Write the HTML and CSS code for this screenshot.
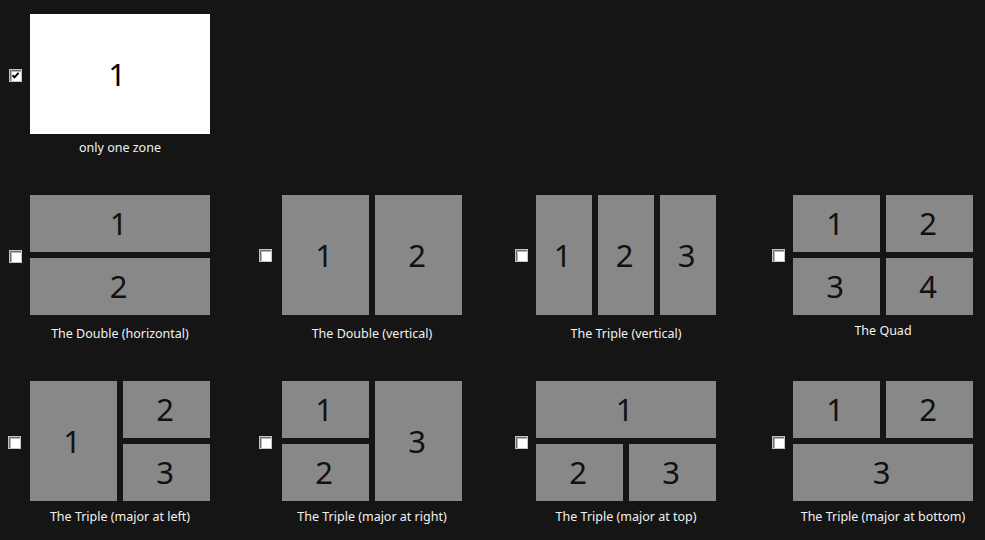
FILE: index.html
```html
<!DOCTYPE html>
<html lang="en">
<head>
<meta charset="utf-8">
<title>Zone layouts</title>
<link rel="stylesheet" href="styles.css">
</head>
<body>
<div class="layouts">
  <div class="item solo">
    <span class="check checked"><svg viewBox="0 0 13 13" width="13" height="13"><path d="M3.5 6.2 L5.5 8.3 L9.6 3.8" fill="none" stroke="#000" stroke-width="2"/></svg></span>
    <div class="card">
      <div class="zones single"><div class="z white">1</div></div>
      <div class="label l-r1">only one zone</div>
    </div>
  </div>

  <div class="item">
    <span class="check"></span>
    <div class="card">
      <div class="zones double-h"><div class="z">1</div><div class="z">2</div></div>
      <div class="label l-r2">The Double (horizontal)</div>
    </div>
  </div>
  <div class="item wide-gap">
    <span class="check up"></span>
    <div class="card">
      <div class="zones double-v"><div class="z">1</div><div class="z">2</div></div>
      <div class="label l-r2">The Double (vertical)</div>
    </div>
  </div>
  <div class="item">
    <span class="check up"></span>
    <div class="card">
      <div class="zones triple-v"><div class="z">1</div><div class="z">2</div><div class="z">3</div></div>
      <div class="label l-r2">The Triple (vertical)</div>
    </div>
  </div>
  <div class="item">
    <span class="check up"></span>
    <div class="card">
      <div class="zones quad"><div class="z">1</div><div class="z">2</div><div class="z">3</div><div class="z">4</div></div>
      <div class="label l-quad">The Quad</div>
    </div>
  </div>

  <div class="item shift">
    <span class="check"></span>
    <div class="card">
      <div class="zones major-left"><div class="z a">1</div><div class="z b">2</div><div class="z c">3</div></div>
      <div class="label">The Triple (major at left)</div>
    </div>
  </div>
  <div class="item wide-gap">
    <span class="check"></span>
    <div class="card">
      <div class="zones major-right"><div class="z a">1</div><div class="z b">2</div><div class="z c">3</div></div>
      <div class="label">The Triple (major at right)</div>
    </div>
  </div>
  <div class="item">
    <span class="check"></span>
    <div class="card">
      <div class="zones major-top"><div class="z a">1</div><div class="z b">2</div><div class="z c">3</div></div>
      <div class="label">The Triple (major at top)</div>
    </div>
  </div>
  <div class="item">
    <span class="check"></span>
    <div class="card">
      <div class="zones major-bottom"><div class="z a">1</div><div class="z b">2</div><div class="z c">3</div></div>
      <div class="label">The Triple (major at bottom)</div>
    </div>
  </div>
</div>
</body>
</html>
```

FILE: styles.css
```css
html, body {
  margin: 0;
  padding: 0;
  background: #151515;
  height: 100%;
  overflow: hidden;
}

body {
  font-family: "Noto Sans", "Open Sans", sans-serif;
  color: #f2f2f2;
}

.layouts {
  display: grid;
  grid-template-columns: 250px 256px 257px 1fr;
  grid-template-rows: 181px 186px auto;
  padding: 14px 0 0 9px;
}

.item {
  display: flex;
  align-items: flex-start;
}

.item.solo {
  grid-column: 1 / -1;
}

.item.shift {
  margin-left: -1px;
}

.check {
  flex: none;
  width: 13px;
  height: 13px;
  box-sizing: border-box;
  margin-top: 55px;
  margin-right: 8px;
  background: #ffffff;
  border: 1px solid #c4c4c4;
  box-shadow: inset 1px 1px 0 #6f6f6f, inset 2px 2px 0 #b4b4b4;
  position: relative;
}

.check.up {
  margin-top: 54px;
}

.item.wide-gap .check {
  margin-right: 10px;
}

.item.shift .check {
  margin-right: 9px;
}

.check svg {
  position: absolute;
  left: -1px;
  top: -1px;
}

.card {
  display: flex;
  flex-direction: column;
  width: 180px;
}

.zones {
  width: 180px;
  height: 120px;
  display: grid;
  gap: 6px;
}

.z {
  background: #888888;
  color: #111111;
  display: flex;
  align-items: center;
  justify-content: center;
  padding-right: 3px;
  font-family: "Noto Sans", "Open Sans", sans-serif;
  font-size: 31px;
  line-height: 1;
}

.z.white {
  background: #ffffff;
  color: #000000;
  padding-right: 6px;
}

.single { grid-template: 1fr / 1fr; }
.double-h { grid-template-rows: 1fr 1fr; }
.double-v { grid-template-columns: 1fr 1fr; }
.triple-v { grid-template-columns: 1fr 1fr 1fr; }
.quad { grid-template: 1fr 1fr / 1fr 1fr; }

.major-left {
  grid-template: 1fr 1fr / 1fr 1fr;
  grid-template-areas: "a b" "a c";
}
.major-right {
  grid-template: 1fr 1fr / 1fr 1fr;
  grid-template-areas: "a c" "b c";
}
.major-top {
  grid-template: 1fr 1fr / 1fr 1fr;
  grid-template-areas: "a a" "b c";
}
.major-bottom {
  grid-template: 1fr 1fr / 1fr 1fr;
  grid-template-areas: "a b" "c c";
}
.z.a { grid-area: a; }
.z.b { grid-area: b; }
.z.c { grid-area: c; }

.label {
  text-align: center;
  font-size: 12.5px;
  line-height: 16px;
  margin-top: 8px;
  white-space: nowrap;
}

.l-r1 { margin-top: 6px; }
.l-r2 { margin-top: 11px; }
.l-quad { margin-top: 8px; }
```
